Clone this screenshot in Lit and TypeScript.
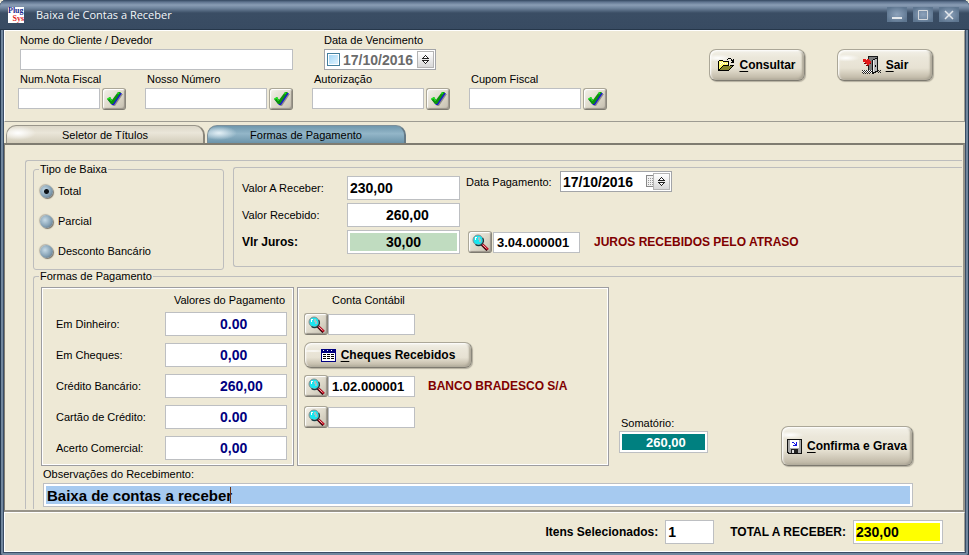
import { LitElement, html, css, svg, nothing } from "lit";
import { customElement, property } from "lit/decorators.js";
import { classMap } from "lit/directives/class-map.js";

const check = svg`<svg class="ico" width="17" height="15" viewBox="0 0 17 15" aria-hidden="true">
  <path d="M3 9 L5 8 L8 10 L14 2 L17 2 L9 14 L7 14 Z" fill="#8f8f8a"/>
  <path d="M2 8 L5 7 L7 9 L13 1 L16 1 L8 13 L6 13 Z" fill="#1818d0"/>
  <path d="M1 7 L4 5 L6 8 L12 0 L15 0 L7 12 L5 12 Z" fill="#0c940c"/>
  <path d="M1.500 7 L4 6 L5.500 9 M11.500 2 L13 0.500" stroke="#20e020" stroke-width="1.400" fill="none"/></svg>`;

const lens = svg`<svg class="ico" width="17" height="17" viewBox="0 0 17 17" aria-hidden="true">
  <path d="M9.500 10 L15.500 16" stroke="#2a0008" stroke-width="3"/>
  <path d="M10 10 L16 15.500" stroke="#c80c20" stroke-width="2"/>
  <path d="M10.500 10.500 L14.500 14.500" stroke="#f4d8d8" stroke-width="0.800"/>
  <circle cx="6" cy="6" r="5" fill="#19e6f0" stroke="#8c8c8c" stroke-width="1"/>
  <path d="M10.700 4 A5 5 0 0 1 3.500 10.600" fill="none" stroke="#143c44" stroke-width="1.200"/>
  <path d="M6 3h2v2h1v3h-2v-2h-1z" fill="#9cc4c8"/>
  <path d="M3 3h2v1h-1v2h-1z" fill="#fff"/></svg>`;

const folder = svg`<svg class="ico" width="16" height="14" viewBox="0 0 16 14" shape-rendering="crispEdges" aria-hidden="true">
  <path d="M0 3h1v-1h4v1h6v5h1v-1h4v1h-1v1h-1v1h-1v1h-1v1h-1v1h-11z" fill="#000"/>
  <path d="M1 3h4v1h5v3h-5v1h-1v1h-1v1h-1v1h-1z" fill="#fff86a"/>
  <path d="M2 4h1v1h-1zM4 4h1v1h-1zM3 5h1v1h-1zM5 5h1v1h-1zM7 5h1v1h-1zM2 6h1v1h-1zM9 5h1v1h-1z" fill="#fff"/>
  <path d="M5 8h9v1h-1v1h-1v1h-1v1h-9v-1h1v-1h1v-1h1z" fill="#84842c"/>
  <path d="M9 1h1v-1h3v1h-3v1h-1zM13 1h1v1h1v-1h1v4h-3v-1h1v-1h-1z" fill="#000"/></svg>`;

const door = svg`<svg class="ico" width="19" height="18" viewBox="0 0 19 18" shape-rendering="crispEdges" aria-hidden="true">
  <path d="M6 0h10v16h-10z" fill="#1a1a1a"/>
  <path d="M7 1h8v14h-8z" fill="#7c7c7c"/>
  <path d="M10 4h1v-1h2v-1h2v-1h1v15h-2v1h-2v1h-2z" fill="#111"/>
  <path d="M11 4h2v-1h2v12h-2v1h-2z" fill="#b8b8b8"/>
  <path d="M11 4h1v12h-1z" fill="#eee"/>
  <path d="M13 9h1v2h-1z" fill="#000"/>
  <path d="M1 3h3v1h1v-1h2v1h1v1h1v2h-1v1h-1v1h-2v-1h-1v-1h-1v-1h-2z" fill="#e41818"/>
  <path d="M4 9h3v1h-3zM2 7h2v1h-2zM8 7h1v1h-1z" fill="#700"/>
  <path d="M0 14.500H10M1 15.500H10M0 16.500H10M16 14.500H19M17 15.500H19M16 16.500H19M1 17.500H9" stroke="#222" stroke-dasharray="1 1"/>
  <path d="M1 14.500H10M0 15.500H10M1 16.500H10" stroke="#fff" stroke-dasharray="1 1"/></svg>`;

const sheet = svg`<svg class="ico" width="15" height="13" viewBox="0 0 15 13" shape-rendering="crispEdges" aria-hidden="true">
  <path d="M0 0h15v13h-15z" fill="#000080"/><path d="M1 4h13v8h-13z" fill="#fff"/>
  <path d="M2 1.500h12" stroke="#fff" stroke-dasharray="1 3"/>
  <path d="M2 5.500h12M2 7.500h12M2 9.500h12" stroke="#000" stroke-dasharray="3 1"/></svg>`;

const floppy = svg`<svg class="ico" width="15" height="15" viewBox="0 0 15 15" shape-rendering="crispEdges" aria-hidden="true">
  <path d="M0 0h15v15h-14l-1-1z" fill="#111"/><path d="M1 1h13v13h-12l-1-1z" fill="#a8a8a8"/>
  <path d="M3 1h9v8h-9z" fill="#fff"/><path d="M4 10h7v4h-7z" fill="#222"/><path d="M5 11h2v3h-2z" fill="#ddd"/>
  <path d="M5 3h2v1h1v1h1v-2h1v4h-4v-1h2v-1h-1v-1h-2z" fill="#1414e0"/></svg>`;

const spin = svg`<svg width="7" height="9" viewBox="0 0 7 9" shape-rendering="crispEdges" aria-hidden="true">
  <path d="M3 0h1v1h1v1h1v1h1v1h-7v-1h1v-1h1v-1h1zM0 5h7v1h-1v1h-1v1h-1v1h-1v-1h-1v-1h-1v-1h-1z" fill="#222"/>
  <path d="M3 1h1v1h1v1h-3v-1h1zM2 6h3v1h-1v1h-1v-1h-1z" fill="#fff"/></svg>`;

const calendar = svg`<svg width="8" height="13" viewBox="0 0 8 13" shape-rendering="crispEdges" aria-hidden="true">
  <path d="M8 0.500H1.500V11.500H8" fill="#f2f2f2" stroke="#888"/>
  <path d="M3 3.500h5M3 5.500h5M3 7.500h5M3 9.500h5" stroke="#999" stroke-dasharray="1 1"/></svg>`;

const icons: Record<string, unknown> = { check, lens, folder, door, sheet, floppy };

const base = css`
  * { box-sizing: border-box; }
  :host, input, button { font-family: "Liberation Sans", Arial, sans-serif; }
  input { margin: 0; outline: none; border-radius: 0; }
`;

@customElement("skin-button")
class SkinButton extends LitElement {
  @property() icon = "";
  @property() text = "";
  @property() hint = "";
  @property({ type: Boolean, reflect: true }) small = false;

  static styles = [base, css`
    :host { display: flex; flex: none; }
    button {
      flex: 1; display: flex; align-items: center; justify-content: center; gap: 5px;
      margin: 0; padding: 0; color: #000; font-size: 12px; font-weight: bold; line-height: 14px; white-space: nowrap;
      border: 1px solid #aba798; border-right-color: #8a877c; border-bottom-color: #7d7a70; border-radius: 7px;
      background:
        radial-gradient(ellipse at 8px 8px, #fff 0, #fff0 14px),
        linear-gradient(#f3f1e8 0, #ebe7da 25%, #e7e2d3 60%, #cbc4b3 85%, #b9b2a1 100%);
      box-shadow: inset 1px 1px 2px #fff, inset -2px -1px 2px #aca696, 1px 1px 1px #b3ae9f;
    }
    :host([small]) button {
      border-radius: 3px;
      background: linear-gradient(135deg, #f4f2ea, #ddd8c9 55%, #c3bdae);
      box-shadow: inset 1px 1px 1px #fff, inset -1px -1px 1px #99948a;
    }
    .key { text-decoration: underline; text-underline-offset: 2px; }
    .ico { flex: none; }
  `];

  render() {
    return html`<button type="button" aria-label=${this.hint || nothing}>
      ${icons[this.icon]}
      ${this.text ? html`<span><span class="key">${this.text[0]}</span>${this.text.slice(1)}</span>` : nothing}
    </button>`;
  }
}

interface Payment { id: string; label: string; value: string; account?: string; note?: string; cheques?: boolean; }

const payments: Payment[] = [
  { id: "dinheiro", label: "Em Dinheiro:", value: "0.00", account: "" },
  { id: "cheques", label: "Em Cheques:", value: "0,00", cheques: true },
  { id: "credito", label: "Crédito Bancário:", value: "260,00", account: "1.02.000001", note: "BANCO BRADESCO S/A" },
  { id: "cartao", label: "Cartão de Crédito:", value: "0.00", account: "" },
  { id: "acerto", label: "Acerto Comercial:", value: "0,00" },
];

const filters = [
  { id: "nota", label: "Num.Nota Fiscal", size: "w-s" },
  { id: "nosso", label: "Nosso Número", size: "w-l" },
  { id: "autorizacao", label: "Autorização", size: "w-m" },
  { id: "cupom", label: "Cupom Fiscal", size: "w-m" },
];

const kinds = ["Total", "Parcial", "Desconto Bancário"];

@customElement("app-root")
class AppRoot extends LitElement {
  static styles = [base, css`
    :host { display: block; background: #eee9d6; color: #000; font-size: 11px; line-height: 14px; }
    .window {
      display: flex; flex-direction: column; min-height: 100vh; padding: 0 4px 4px;
      border-radius: 6px 6px 3px 3px; background: #3a4d66;
      box-shadow: inset 1px 0 #24384f, inset -1px 0 #24384f, inset 0 -1px #24384f, inset 3px 0 #71879e, inset -3px 0 #71879e, inset 0 -3px #71879e;
    }
    .titlebar {
      display: flex; align-items: center; height: 30px; margin: 0 -4px; padding: 0 10px 0 8px;
      border-radius: 6px 6px 0 0; border-bottom: 1px solid #26374a;
      background: linear-gradient(#33465f 0, #5f748f 2px, #8a9db5 5px, #70859e 8px, #3a4d64 13px, #384b62 100%);
    }
    .logo { flex: none; display: grid; width: 16px; height: 16px; background: #fff; overflow: hidden;
      font: bold 8px/8px "Liberation Serif", serif; color: #1a2a8c; }
    .logo span:last-child { color: #e01c1c; text-align: right; }
    h1 { flex: 1; margin: 0 0 0 12px; font: 11px/16px "Open Sans", sans-serif; color: #f4f7fa; }
    .controls { display: flex; gap: 6px; }
    .controls button { display: grid; place-items: center; width: 20px; height: 15px; padding: 0; border: 0;
      background: radial-gradient(#8da2bb, #5e7690 80%); }

    .panel { border: 1px solid #9d9b92; border-top-color: #fff; border-left-color: #fff; background: #eee9d6; }
    .search { display: flex; justify-content: space-between; align-items: flex-start; padding: 2px 31px 11px 13px; }
    .rows { display: flex; flex-direction: column; gap: 2px; }
    .row { display: flex; gap: 19px; }
    .row.first { gap: 31px; padding-left: 2px; }
    .field { display: flex; flex-direction: column; gap: 2px; }
    .first label { padding-left: 0; }
    .pair { display: flex; gap: 2px; }
    .pair, .row label { margin: 0; }
    .row:not(.first) label { padding-left: 2px; }
    .box { height: 21px; padding: 0 2px; border: 1px solid #bdbfc2; background: #fff; color: #000; font-size: 13px; font-weight: bold; }
    .tall { height: 24px; font-size: 14px; }
    .w-s { width: 82px; } .w-m { width: 112px; } .w-l { width: 122px; } .w-name { width: 273px; }
    .mini { width: 24px; height: 22px; }
    .actions { display: flex; gap: 32px; padding-top: 16px; }
    .act { width: 96px; height: 32px; }

    .date { display: flex; align-items: center; width: 112px; height: 21px; padding: 0 1px 0 2px; border: 1px solid #a2a4a8; background: #fff; }
    .date input[type="text"] { flex: 1; min-width: 0; height: 17px; padding: 0; border: 0; font-size: 14px; font-weight: bold; background: none; }
    .date.off input[type="text"] { color: #6b6b6b; }
    .date input[type="checkbox"] { appearance: none; flex: none; width: 13px; height: 13px; margin-right: 3px;
      border: 1px solid #44809e; background: linear-gradient(135deg, #9ed4f6, #e6f6ff); box-shadow: inset 0 0 0 1px #fff; }
    .date button { display: grid; place-items: center; flex: none; width: 17px; height: 17px; padding: 0;
      border: 1px solid #b4b4b4; background: linear-gradient(#fff, #d8d8d8); }

    .tabs { display: flex; gap: 2px; height: 21px; padding: 3px 2px 0; background: #eee9d6; }
    .tab { width: 199px; padding: 0; border: 1px solid #99958a; border-bottom: 0; border-right: 2px solid #8a867b; border-radius: 10px 10px 0 0;
      font-size: 11px; line-height: 14px; color: #000;
      background: radial-gradient(ellipse 18px 7px at 11px 7px, #fff 0, #fff0 100%), linear-gradient(#dcd7c8, #eae6d9 40%, #d2ccba); }
    .tab.on { border-color: #7c8f9a; border-right-color: #667a86;
      background: radial-gradient(ellipse 18px 7px at 11px 7px, #e4f0f6 0, #e4f0f600 100%), linear-gradient(#6f97ad, #93b6c8 45%, #6c94aa); }

    .page { flex: 1; display: flex; padding: 15px 1px 1px 20px; border: 2px solid #7f7c71; border-left-width: 1px;
      border-right-color: #98948a; border-bottom-color: #98948a; background: #eee9d6; }
    .group { flex: 1; display: flex; flex-direction: column; min-width: 0; padding: 2px 0 0 7px;
      border: solid #bdbdbd; border-width: 1px 0 0 1px; border-radius: 3px 0 0 0; }
    .top { display: flex; gap: 9px; }
    fieldset { min-width: 0; margin: 0; padding: 0; border: 1px solid #bdbdbd; border-radius: 3px; }
    legend { margin-left: 5px; padding: 0 1px; line-height: 13px; }
    .kind { width: 191px; }
    .options { display: flex; flex-direction: column; gap: 16px; padding: 8px 0 11px 6px; }
    .options label { display: flex; align-items: center; gap: 5px; }
    .options input { appearance: none; width: 13px; height: 13px; border-radius: 50%;
      background: radial-gradient(circle at 5px 5px, #c6dae6, #84a0b4 55%, #4e5f6e);
      box-shadow: 1px 1px 1px #77736a, -1px -1px 1px #b8b4a8; }
    .options input:checked { background: radial-gradient(circle, #0c1218 0 2px, #0c121800 3px), radial-gradient(circle at 5px 5px, #c6dae6, #84a0b4 55%, #4e5f6e); }

    .values { flex: 1; display: flex; gap: 6px; margin: 4px 0 3px; padding: 3px 0 0 8px;
      border: 1px solid #bdbdbd; border-right: 0; border-radius: 3px 0 0 3px; }
    .left { display: flex; flex-direction: column; gap: 3px; padding-top: 5px; }
    .line { display: flex; align-items: center; }
    .left label { width: 105px; }
    .left input, .left .well { width: 113px; }
    .left label.strong { font-size: 12px; font-weight: bold; }
    .right { display: flex; flex-direction: column; justify-content: space-between; padding-bottom: 13px; }
    .right .line label { width: 94px; }
    .juros { display: flex; align-items: center; gap: 1px; padding-left: 2px; }
    .acc { width: 87px; padding: 0 3px; }
    .note { margin-left: 13px; font-size: 12px; font-weight: bold; color: #800000; white-space: nowrap; }
    .indent { padding-left: 38px; }
    .well { padding: 2px; border: 1px solid #bdbfc2; background: #fff; }
    .well input { display: block; width: 100%; height: 18px; padding: 0; border: 0; font-size: 14px; font-weight: bold; }
    .well .green { padding-left: 36px; background: #c0dcc0; }
    .well .teal { height: 16px; padding-left: 24px; font-size: 13px; background: #008080; color: #fff; }
    .well .yellow { background: #ffff00; }
    .well .blue { padding-left: 1px; font-size: 15px; background: #a6caf0; }

    .forms { flex: 1; border-width: 1px 0 0 1px; border-radius: 3px 0 0 0; }
    .body { display: flex; flex-direction: column; padding: 4px 49px 0 7px; }
    .cols { display: flex; gap: 3px; }
    .card { display: grid; grid-template-rows: 10px repeat(5, 24px); row-gap: 7px; align-items: center; padding: 7px 6px 5px 6px;
      border: 1px solid #9d9da1; box-shadow: inset 0 0 0 1px #fff; }
    .pay { width: 253px; grid-template-columns: 109px 1fr; padding-left: 14px; }
    .pay .head { grid-column: 2; justify-self: end; padding-right: 2px; }
    .pay input { width: 100%; padding-left: 54px; color: #000080; }
    .conta { width: 312px; }
    .conta .head { padding-left: 28px; }
    .cheq { width: 168px; height: 26px; }
    .sum { align-self: flex-end; width: 89px; margin: 0 0 13px 7px; }
    .sum label { display: block; padding: 0 0 1px 2px; }
    .grava { align-self: flex-end; width: 132px; height: 40px; margin-left: auto; }
    .obs { position: relative; }
    .caret { position: absolute; left: 186px; top: 3px; width: 1px; height: 16px; background: #6b2f10; }
    .obs-label { padding: 1px 0 2px 2px; }
    .obs-wrap { padding: 0 0 2px 2px; }

    .status { display: flex; justify-content: flex-end; align-items: center; height: 40px; padding-right: 21px; border-bottom-color: #fff; }
    .status label { margin-right: 7px; font-size: 12px; font-weight: bold; }
    .count { width: 49px; margin-right: 16px; }
    .total { width: 90px; }
  `];

  private account(p: Payment) {
    if (p.cheques) return html`<skin-button class="cheq" icon="sheet" text="Cheques Recebidos"></skin-button>`;
    if (p.account === undefined) return nothing;
    return html`<div class="line">
      <skin-button class="mini" small icon="lens" hint="Pesquisar conta"></skin-button>
      <input class="box acc" type="text" aria-label="Conta contábil" .value=${p.account} />
      ${p.note ? html`<span class="note">${p.note}</span>` : nothing}
    </div>`;
  }

  render() {
    return html`<div class="window">
      <header class="titlebar">
        <div class="logo"><span>Plug</span><span>Sys</span></div>
        <h1>Baixa de Contas a Receber</h1>
        <div class="controls">
          <button aria-label="Minimizar"><svg width="12" height="12"><path d="M1 9h10" stroke="#e4e8ec" stroke-width="2"/></svg></button>
          <button aria-label="Maximizar"><svg width="12" height="12"><path d="M1.500 1.500h9v9h-9z" fill="none" stroke="#d4d8dc"/></svg></button>
          <button aria-label="Fechar"><svg width="12" height="12"><path d="M2 2l8 8M10 2l-8 8" stroke="#e4e8ec" stroke-width="1.500"/></svg></button>
        </div>
      </header>

      <section class="panel search">
        <div class="rows">
          <div class="row first">
            <div class="field">
              <label for="cliente">Nome do Cliente / Devedor</label>
              <input id="cliente" class="box w-name" type="text" />
            </div>
            <div class="field">
              <label for="venc">Data de Vencimento</label>
              <div class="date off">
                <input type="checkbox" aria-label="Usar data de vencimento" />
                <input id="venc" type="text" value="17/10/2016" />
                <button aria-label="Alterar data">${spin}</button>
              </div>
            </div>
          </div>
          <div class="row">
            ${filters.map((f) => html`<div class="field">
              <label for=${f.id}>${f.label}</label>
              <div class="pair">
                <input id=${f.id} class=${"box " + f.size} type="text" />
                <skin-button class="mini" small icon="check" hint="Confirmar"></skin-button>
              </div>
            </div>`)}
          </div>
        </div>
        <div class="actions">
          <skin-button class="act" icon="folder" text="Consultar"></skin-button>
          <skin-button class="act" icon="door" text="Sair"></skin-button>
        </div>
      </section>

      <nav class="tabs">
        ${["Seletor de Títulos", "Formas de Pagamento"].map((t, i) => html`<button class=${classMap({ tab: true, on: i === 1 })}>${t}</button>`)}
      </nav>

      <main class="page">
        <div class="group">
          <div class="top">
            <fieldset class="kind">
              <legend>Tipo de Baixa</legend>
              <div class="options">
                ${kinds.map((k, i) => html`<label><input type="radio" name="tipo" ?checked=${i === 0} />${k}</label>`)}
              </div>
            </fieldset>
            <div class="values">
              <div class="left">
                <div class="line"><label for="areceber">Valor A Receber:</label><input id="areceber" class="box tall" type="text" value="230,00" /></div>
                <div class="line"><label for="recebido">Valor Recebido:</label><input id="recebido" class="box tall indent" type="text" value="260,00" /></div>
                <div class="line"><label class="strong" for="juros">Vlr Juros:</label><div class="well"><input id="juros" class="green" type="text" value="30,00" /></div></div>
              </div>
              <div class="right">
                <div class="line"><label for="datapag">Data Pagamento:</label>
                  <div class="date"><input id="datapag" type="text" value="17/10/2016" />${calendar}<button aria-label="Alterar data">${spin}</button></div>
                </div>
                <div class="juros">
                  <skin-button class="mini" small icon="lens" hint="Pesquisar conta"></skin-button>
                  <input class="box acc" type="text" aria-label="Conta de juros" value="3.04.000001" />
                  <span class="note">JUROS RECEBIDOS PELO ATRASO</span>
                </div>
              </div>
            </div>
          </div>

          <fieldset class="forms">
            <legend>Formas de Pagamento</legend>
            <div class="body">
              <div class="cols">
                <div class="card pay">
                  <span class="head">Valores do Pagamento</span>
                  ${payments.map((p) => html`<label for=${p.id}>${p.label}</label><input id=${p.id} class="box tall" type="text" .value=${p.value} />`)}
                </div>
                <div class="card conta">
                  <span class="head">Conta Contábil</span>
                  ${payments.map((p) => this.account(p))}
                </div>
                <div class="sum">
                  <label for="soma">Somatório:</label>
                  <div class="well"><input id="soma" class="teal" type="text" value="260,00" /></div>
                </div>
                <skin-button class="grava" icon="floppy" text="Confirma e Grava"></skin-button>
              </div>
              <label class="obs-label" for="obs">Observações do Recebimento:</label>
              <div class="obs-wrap"><div class="well obs">
                <input id="obs" class="blue" type="text" value="Baixa de contas a receber" />
                <span class="caret"></span>
              </div></div>
            </div>
          </fieldset>
        </div>
      </main>

      <footer class="panel status">
        <label for="itens">Itens Selecionados:</label>
        <input id="itens" class="box tall count" type="text" value="1" />
        <label for="total">TOTAL A RECEBER:</label>
        <div class="well total"><input id="total" class="yellow" type="text" value="230,00" /></div>
      </footer>
    </div>`;
  }
}
